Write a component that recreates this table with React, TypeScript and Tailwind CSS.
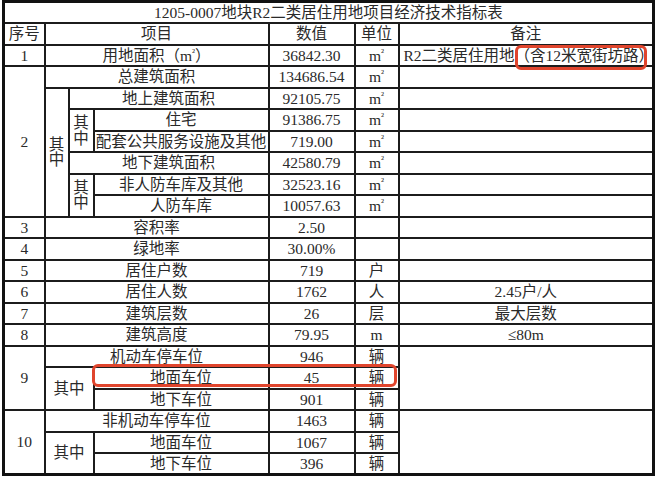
import React from "react";

const td = "border-2 border-[#1c1c1c] text-center align-middle p-0 leading-none whitespace-nowrap";

const Row = ({ children }: { children: React.ReactNode }) => <tr className="h-[21.5px]">{children}</tr>;

const simple: [string, string, string, string, string][] = [
  ["3", "容积率", "2.50", "", ""],
  ["4", "绿地率", "30.00%", "", ""],
  ["5", "居住户数", "719", "户", ""],
  ["6", "居住人数", "1762", "人", "2.45户/人"],
  ["7", "建筑层数", "26", "层", "最大层数"],
  ["8", "建筑高度", "79.95", "m", "≤80m"],
];

const m2 = (
  <span>
    m<span className="text-[10px] align-[5px]">²</span>
  </span>
);

const parking = [
  { n: "9", head: "机动车停车位", total: "946", ground: "45", under: "901" },
  { n: "10", head: "非机动车停车位", total: "1463", ground: "1067", under: "396" },
];

export default function App() {
  return (
    <div className="w-[660px] h-[479px] bg-white relative text-[#2a2a2a] font-['Liberation_Serif','Noto_Sans_CJK_SC',serif] text-[15.5px]">
      <table className="table-fixed border-collapse border-[3px] border-[#111] w-[653px] h-[474px] ml-[2px]">
        <colgroup>
          <col className="w-[41px]" />
          <col className="w-[24px]" />
          <col className="w-[25px]" />
          <col className="w-[175px]" />
          <col className="w-[86px]" />
          <col className="w-[44px]" />
          <col />
        </colgroup>
        <tbody>
          <Row>
            <td colSpan={7} className={`${td} border-t-[3px] border-t-[#111]`}>
              1205-0007地块R2二类居住用地项目经济技术指标表
            </td>
          </Row>
          <Row>
            <td className={td}>序号</td>
            <td colSpan={3} className={td}>项目</td>
            <td className={td}>数值</td>
            <td className={td}>单位</td>
            <td className={td}>备注</td>
          </Row>
          <Row>
            <td className={td}>1</td>
            <td colSpan={3} className={td}>用地面积（{m2}）</td>
            <td className={td}>36842.30</td>
            <td className={td}>{m2}</td>
            <td className={`${td} text-left pl-[4px]`}>R2二类居住用地（含12米宽街坊路）</td>
          </Row>
          <Row>
            <td rowSpan={7} className={td}>2</td>
            <td colSpan={3} className={td}>总建筑面积</td>
            <td className={td}>134686.54</td>
            <td className={td}>{m2}</td>
            <td className={td}></td>
          </Row>
          <Row>
            <td rowSpan={6} className={`${td} leading-[21px]`}>
              其<br />中
            </td>
            <td colSpan={2} className={td}>地上建筑面积</td>
            <td className={td}>92105.75</td>
            <td className={td}>{m2}</td>
            <td className={td}></td>
          </Row>
          <Row>
            <td rowSpan={2} className={`${td} leading-[21px]`}>
              其<br />中
            </td>
            <td className={td}>住宅</td>
            <td className={td}>91386.75</td>
            <td className={td}>{m2}</td>
            <td className={td}></td>
          </Row>
          <Row>
            <td className={td}>配套公共服务设施及其他</td>
            <td className={td}>719.00</td>
            <td className={td}>{m2}</td>
            <td className={td}></td>
          </Row>
          <Row>
            <td colSpan={2} className={td}>地下建筑面积</td>
            <td className={td}>42580.79</td>
            <td className={td}>{m2}</td>
            <td className={td}></td>
          </Row>
          <Row>
            <td rowSpan={2} className={`${td} leading-[21px]`}>
              其<br />中
            </td>
            <td className={td}>非人防车库及其他</td>
            <td className={td}>32523.16</td>
            <td className={td}>{m2}</td>
            <td className={td}></td>
          </Row>
          <Row>
            <td className={td}>人防车库</td>
            <td className={td}>10057.63</td>
            <td className={td}>{m2}</td>
            <td className={td}></td>
          </Row>
          {simple.map(([n, name, val, unit, note]) => (
            <Row key={n}>
              <td className={td}>{n}</td>
              <td colSpan={3} className={td}>{name}</td>
              <td className={td}>{val}</td>
              <td className={td}>{unit}</td>
              <td className={td}>{note}</td>
            </Row>
          ))}
          {parking.map((g, i) => {
            const last = i === parking.length - 1 ? `${td} border-b-[3px] border-b-[#111]` : td;
            return (
              <React.Fragment key={g.n}>
                <Row>
                  <td rowSpan={3} className={last}>{g.n}</td>
                  <td colSpan={3} className={td}>{g.head}</td>
                  <td className={td}>{g.total}</td>
                  <td className={td}>辆</td>
                  <td rowSpan={3} className={last}></td>
                </Row>
                <Row>
                  <td rowSpan={2} colSpan={2} className={last}>其中</td>
                  <td className={td}>地面车位</td>
                  <td className={td}>{g.ground}</td>
                  <td className={td}>辆</td>
                </Row>
                <Row>
                  <td className={last}>地下车位</td>
                  <td className={last}>{g.under}</td>
                  <td className={last}>辆</td>
                </Row>
              </React.Fragment>
            );
          })}
        </tbody>
      </table>

      {/* red highlight marks */}
      <div className="absolute left-[515px] top-[45px] w-[132px] h-[25px] border-[3px] border-[#e0452d] rounded-[6px]" />
      <div className="absolute left-[92px] top-[364px] w-[305px] h-[23px] border-[3px] border-[#e0452d] rounded-[6px]" />
    </div>
  );
}
